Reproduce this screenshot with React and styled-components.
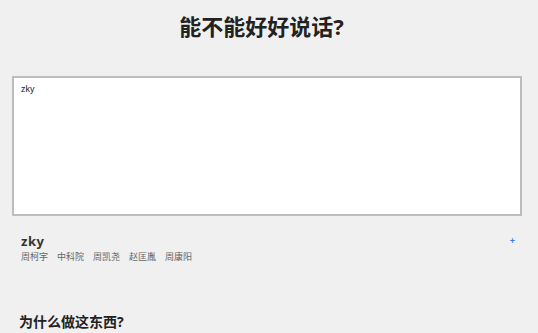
import styled, { createGlobalStyle } from "styled-components";

const GlobalStyle = createGlobalStyle`
  html, body {
    margin: 0;
    padding: 0;
    background: #eff0ef;
    font-family: "Noto Sans", "Noto Sans CJK SC", sans-serif;
    color: #222;
    overflow: hidden;
  }
`;

const Page = styled.div`
  width: 523px;
`;

const Title = styled.h1`
  margin: 11px 0 35px;
  font-size: 22px;
  line-height: 30px;
  font-weight: 700;
  text-align: center;
  color: #222;
`;

const Body = styled.div`
  padding: 0 12px;
`;

const Input = styled.textarea`
  display: block;
  box-sizing: border-box;
  width: 510px;
  height: 140px;
  margin: 0;
  padding: 5px 7px;
  border: 2px solid #bdbdbd;
  background: #fff;
  font-family: "Liberation Sans", "Noto Sans CJK SC", sans-serif;
  font-size: 9px;
  line-height: 12px;
  color: #222;
  resize: none;
  outline: none;
`;

const Result = styled.div`
  padding: 17px 7px 0 9px;
  width: 510px;
  box-sizing: border-box;
`;

const ResultHead = styled.div`
  display: flex;
  justify-content: space-between;
  align-items: center;
`;

const Word = styled.div`
  font-size: 13px;
  line-height: 16px;
  font-weight: 700;
  letter-spacing: 0.5px;
  color: #333;
`;

const AddButton = styled.button`
  border: 0;
  background: none;
  padding: 0;
  color: #3b7bf6;
  font-family: "Liberation Sans", sans-serif;
  font-size: 9px;
  line-height: 10px;
  font-weight: 700;
  cursor: pointer;
`;

const Translations = styled.div`
  display: flex;
  gap: 9px;
  margin-top: 2px;
`;

const Translation = styled.span`
  font-size: 9px;
  line-height: 12px;
  color: #666;
`;

const SectionTitle = styled.h2`
  margin: 50px 0 0 7px;
  font-size: 14px;
  line-height: 18px;
  font-weight: 700;
  color: #222;
`;

const names = ["周柯宇", "中科院", "周凯尧", "赵匡胤", "周康阳"];

export default function App() {
  return (
    <>
      <GlobalStyle />
      <Page>
        <Title>能不能好好说话?</Title>
        <Body>
          <Input defaultValue="zky" />
          <Result>
            <ResultHead>
              <Word>zky</Word>
              <AddButton>+</AddButton>
            </ResultHead>
            <Translations>
              {names.map((n) => (
                <Translation key={n}>{n}</Translation>
              ))}
            </Translations>
          </Result>
          <SectionTitle>为什么做这东西?</SectionTitle>
        </Body>
      </Page>
    </>
  );
}
